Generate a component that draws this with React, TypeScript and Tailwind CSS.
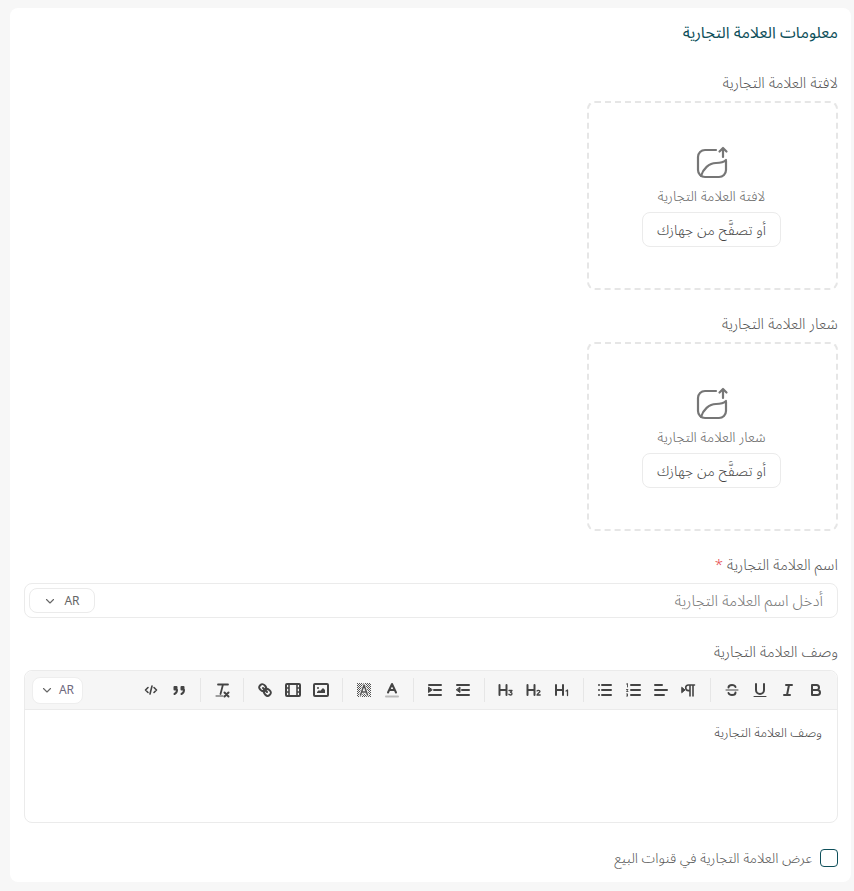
import React from "react";

const S = ({ children }: { children: React.ReactNode }) => (
  <svg viewBox="0 0 18 18" width="18" height="18" fill="none" stroke="#444" strokeWidth="2" strokeLinecap="round" strokeLinejoin="round">
    {children}
  </svg>
);

const Btn = ({ children }: { children: React.ReactNode }) => (
  <span className="flex h-6 w-7 items-center justify-center">{children}</span>
);

const Group = ({ children, last }: { children: React.ReactNode; last?: boolean }) => (
  <div className={last ? "flex items-center" : "ml-[7px] flex h-6 items-center border-l border-[#e6e6e6] pl-[7px]"}>{children}</div>
);

const Upload = () => (
  <svg width="34" height="34" viewBox="0 0 34 34" fill="none" stroke="#767676" strokeWidth="2.2" strokeLinecap="round" strokeLinejoin="round">
    <path d="M21 4H10a7 7 0 0 0-7 7v13a7 7 0 0 0 7 7h14a7 7 0 0 0 7-7v-9" />
    <path d="M6 30C8 23 14 17 21 17c4 0 8-1 10-3" />
    <path d="M28 11V2M24.500 5.500 28 2l3.500 3.500" />
  </svg>
);

const Dropzone = ({ text }: { text: string }) => (
  <div className="flex h-[189px] w-[251px] flex-col items-center rounded-lg border-2 border-dashed border-[#e6e6e6] pt-[43px] pr-[2px]">
    <Upload />
    <span className="mt-1.5 text-[14px] font-light leading-5 text-[#666]">{text}</span>
    <span className="mt-1.5 flex h-[35px] w-[139px] items-center justify-center rounded-lg border border-[#ebebeb] text-[14.3px] font-light text-[#444]">أو تصفَّح من جهازك</span>
  </div>
);

const Chevron = () => (
  <svg width="12" height="12" viewBox="0 0 12 12" fill="none" stroke="#666" strokeWidth="1.1" strokeLinecap="round" strokeLinejoin="round">
    <path d="M2.500 4.500 6 8l3.500-3.500" />
  </svg>
);

const Label = ({ children }: { children: React.ReactNode }) => (
  <div className="mb-2 h-5 text-[15px] font-light leading-[18px] text-[#555]">{children}</div>
);

export default function App() {
  return (
    <div dir="rtl" className="min-h-[891px] bg-[#f7f7f7] pt-2 pr-[3px] pb-[9px] font-['Noto_Sans','Noto_Sans_Arabic','DejaVu_Sans',sans-serif]">
      <div className="flex w-[841px] flex-col rounded-lg bg-white pr-[13px] pl-[14px] pt-[14px] pb-[15px]">
        <div className="mb-[31px] h-5 text-[16px] font-normal leading-5 text-[#0e4f5a]">معلومات العلامة التجارية</div>

        <Label>لافتة العلامة التجارية</Label>
        <Dropzone text="لافتة العلامة التجارية" />

        <div className="mt-6" />
        <Label>شعار العلامة التجارية</Label>
        <Dropzone text="شعار العلامة التجارية" />

        <div className="mt-6" />
        <Label>
          اسم العلامة التجارية <span className="text-[#e5484d]">*</span>
        </Label>
        <div className="flex h-[35px] items-center justify-between rounded-lg border border-[#ebebeb] pr-[14px] pl-1">
          <span className="text-[15.400px] font-light text-[#777]">أدخل اسم العلامة التجارية</span>
          <span dir="ltr" className="flex h-[25px] w-[66px] items-center justify-center gap-2 rounded-lg border border-[#ebebeb] text-xs text-[#666]">
            <Chevron />
            AR
          </span>
        </div>

        <div className="mt-6" />
        <Label>وصف العلامة التجارية</Label>
        <div className="flex h-[153px] flex-col rounded-lg border border-[#ebebeb]">
          <div className="flex h-[39px] items-center justify-between rounded-t-lg border-b border-[#ebebeb] bg-[#f6f6f6] px-[7px]">
            <div className="flex items-center">
              <Group>
                <Btn><S><path d="M5 4h4.500a2.500 2.500 0 0 1 0 5H5zM5 9h5.500a2.500 2.500 0 0 1 0 5H5z" /></S></Btn>
                <Btn><S><path d="M7 4h6M5 14h6M8 14l2-10" /></S></Btn>
                <Btn><S><path d="M5 3v6a4 4 0 0 0 8 0V3" /><path d="M3 15.500h12" strokeWidth="1" /></S></Btn>
                <Btn><S><path d="M3 9h12" strokeWidth="1" /><path d="M12.500 6C12 4.700 10.700 4 9 4 7 4 5.500 5 5.500 6.500M5.500 12c.5 1.300 1.800 2 3.500 2 2 0 3.500-1 3.500-2.500" /></S></Btn>
              </Group>
              <Group>
                <Btn><S><path d="M10 4v11M13 4v11M14.500 4H8.500a2.800 2.800 0 0 0 0 5.600H10" strokeWidth="1.600" /><path d="M2 6.500 5 9l-3 2.500z" fill="#444" strokeWidth="1" /></S></Btn>
                <Btn><S><path d="M3 4h7M3 9h12M3 14h9" /></S></Btn>
                <Btn><S><path d="M7 4h9M7 9h9M7 14h9" /><path d="M2.500 3 3.500 2.500V6M2.500 8.500h1.500L2.500 10.500h1.500M2.500 13h1.500L3 14l1 1H2.500" strokeWidth=".9" /></S></Btn>
                <Btn><S><path d="M6 4h9M6 9h9M6 14h9M3 4h0M3 9h0M3 14h0" /></S></Btn>
              </Group>
              <Group>
                <Btn><S><path d="M3 4v10M10 4v10M3 9h7" /><path d="M13 10l1.500-1v5.500" strokeWidth="1.300" /></S></Btn>
                <Btn><S><path d="M2.500 4v10M9.500 4v10M2.500 9h7" /><path d="M12 10c.3-1 2.800-1 3 .3.100 1-3 2.400-3 3.700h3.200" strokeWidth="1.300" /></S></Btn>
                <Btn><S><path d="M2.500 4v10M9.500 4v10M2.500 9h7" /><path d="M12 9.500h3l-1.500 1.800c2 0 2 2.700 0 2.700-.8 0-1.400-.3-1.700-.8" strokeWidth="1.300" /></S></Btn>
              </Group>
              <Group>
                <Btn><S><path d="M3 4h12M3 14h12M8 9h7" /><path d="M6 6.500v5L2.500 9z" fill="#444" strokeWidth="1" /></S></Btn>
                <Btn><S><path d="M3 4h12M3 14h12M8 9h7" /><path d="M2.500 6.500v5L6 9z" fill="#444" strokeWidth="1" /></S></Btn>
              </Group>
              <Group>
                <Btn><S><path d="M5 11.500 9 3l4 8.500M6.200 9h5.600" /><path d="M3 15.500h12" stroke="#bbb" /></S></Btn>
                <Btn><S><defs><pattern id="h" width="2" height="2" patternUnits="userSpaceOnUse"><rect width="1" height="1" fill="#555" stroke="none" /><rect x="1" y="1" width="1" height="1" fill="#555" stroke="none" /></pattern></defs><rect x="2" y="2" width="14" height="14" fill="url(#h)" stroke="none" /><path d="M5.500 14 9 4l3.500 10M6.500 11h5" strokeWidth="3" stroke="#f6f6f6" /><path d="M5.500 14 9 4l3.500 10M6.500 11h5" strokeWidth="1.500" stroke="#555" /></S></Btn>
              </Group>
              <Group>
                <Btn><S><rect x="2" y="3" width="14" height="12" rx="1" /><circle cx="6" cy="7" r="1" fill="#444" stroke="none" /><path d="M5 12v-1l2-2 1 1 3-3 2 2v3z" fill="#444" stroke="none" /></S></Btn>
                <Btn><S><rect x="2" y="3" width="14" height="12" rx="1" /><path d="M5 3v12M13 3v12M2 7h3M2 11h3M13 7h3M13 11h3" strokeWidth="1.600" /></S></Btn>
                <Btn><S><path d="M7 7 11 11" /><path d="M8.900 4.577a3.476 3.476 0 0 1 .36 4.679A3.476 3.476 0 0 1 4.577 8.900C3.185 7.500 2.035 6.400 4.217 4.217S7.500 3.185 8.900 4.577Z" /><path d="M13.423 9.100a3.476 3.476 0 0 0-4.679-.36 3.476 3.476 0 0 0 .36 4.679c1.392 1.392 2.500 2.542 4.679.36S14.815 10.500 13.423 9.100Z" /></S></Btn>
              </Group>
              <Group>
                <Btn><S><path d="M5 3.500h10M10 3.500 7.500 13" strokeWidth="1.800" /><path d="M3 15h7" strokeWidth="1" /><path d="M11.500 11.500l4 4M15.500 11.500l-4 4" /></S></Btn>
              </Group>
              <Group last>
                <Btn><S><rect x="3.500" y="5" width="4" height="4.500" rx="1" fill="#444" stroke="none" /><rect x="10.500" y="5" width="4" height="4.500" rx="1" fill="#444" stroke="none" /><path d="M7 9c0 2-1 3.300-2.500 4M14 9c0 2-1 3.300-2.500 4" /></S></Btn>
                <Btn><S><path d="M6 6.500 3.500 9 6 11.500M12 6.500 14.500 9 12 11.500M10 5 8 13" strokeWidth="1.600" /></S></Btn>
              </Group>
            </div>
            <span dir="ltr" className="flex h-[27px] w-[51px] items-center justify-center gap-1.5 rounded-lg border border-[#eeeeee] bg-white text-xs text-[#6f6a80]">
              <Chevron />
              AR
            </span>
          </div>
          <div className="px-[15px] pt-3 text-[13px] font-light leading-5 text-[#444]">وصف العلامة التجارية</div>
        </div>

        <div className="mt-[26px] flex items-center gap-2">
          <span className="h-[18px] w-[18px] rounded border-[1.5px] border-[#0e4f5a]" />
          <span className="text-[14px] font-light leading-[18px] text-[#555]">عرض العلامة التجارية في قنوات البيع</span>
        </div>
      </div>
    </div>
  );
}
